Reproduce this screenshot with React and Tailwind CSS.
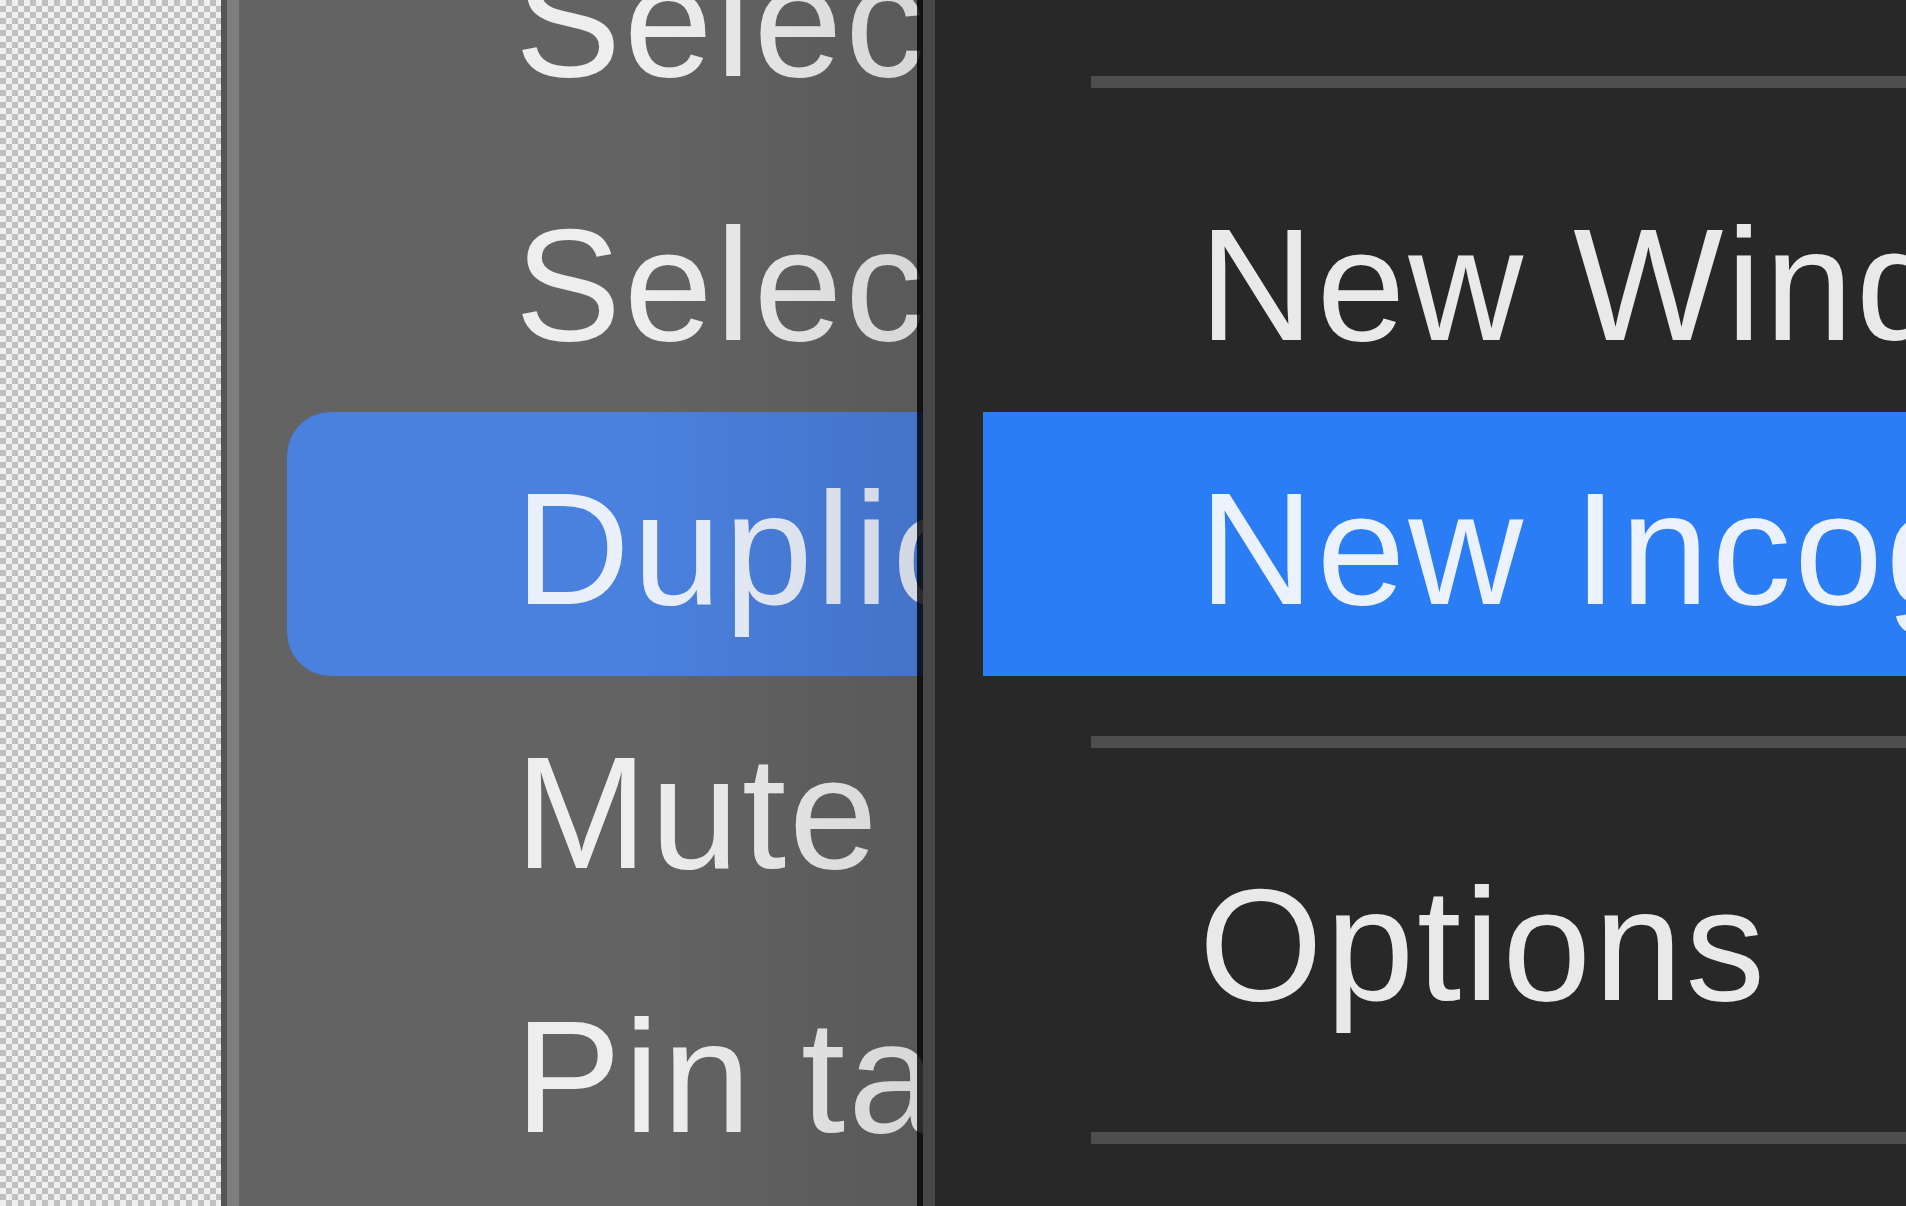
export default function App() {
  const leftRows = [
    { label: "Select all tabs" },
    { label: "Select tabs to the right" },
    { label: "Duplicate tab", active: true },
    { label: "Mute tab" },
    { label: "Pin tab" },
  ];
  return (
    <div className="flex h-[1206px] w-[1906px] overflow-hidden font-['Liberation_Sans',Arial,sans-serif] text-[159px] tracking-[3px]">
      <div className="w-[221px] shrink-0 bg-[#efefef] bg-[image:repeating-conic-gradient(#c0c0c0_0%_25%,#efefef_0%_50%)] bg-[length:12px_12px]" />
      <div className="w-[6px] shrink-0 bg-[#555555]" />
      <div className="w-[12px] shrink-0 bg-[#7e7e7e]" />
      <div className="relative w-[684px] shrink-0 overflow-hidden bg-[#636363]">
        <div className="-mt-[116px] flex flex-col">
          {leftRows.map((r) => (
            <div
              key={r.label}
              className={
                r.active
                  ? "ml-[48px] h-[264px] whitespace-nowrap rounded-l-[44px] bg-[#4a80de] pl-[228px] pt-[10px] leading-[254px] text-[#e9f0fc]"
                  : "ml-[48px] h-[264px] whitespace-nowrap pl-[228px] pt-[10px] leading-[254px] text-[#eeeeee]"
              }
            >
              {r.label}
            </div>
          ))}
        </div>
        <div className="pointer-events-none absolute inset-y-0 right-0 w-[280px] bg-linear-to-l from-black/10 to-transparent" />
        <div className="absolute inset-y-0 right-0 w-[6px] bg-black/80" />
      </div>
      <div className="w-[12px] shrink-0 bg-[#474747]" />
      <div className="min-w-0 flex-1 overflow-hidden bg-[#282828]">
        <div className="mt-[16px] flex flex-col">
          <div className="h-[132px] pt-[60px]">
            <div className="ml-[156px] h-[12px] bg-[#4e4e4e]" />
          </div>
          <div className="ml-[48px] h-[264px] whitespace-nowrap pl-[216px] pt-[10px] leading-[254px] text-[#e9e9e9]">
            New Window
          </div>
          <div className="ml-[48px] h-[264px] whitespace-nowrap bg-[#2b7df5] pl-[216px] pt-[10px] leading-[254px] text-[#ebf2fe]">
            New Incognito Window
          </div>
          <div className="h-[132px] pt-[60px]">
            <div className="ml-[156px] h-[12px] bg-[#4e4e4e]" />
          </div>
          <div className="ml-[48px] h-[264px] whitespace-nowrap pl-[216px] pt-[10px] leading-[254px] text-[#e9e9e9]">
            Options
          </div>
          <div className="h-[132px] pt-[60px]">
            <div className="ml-[156px] h-[12px] bg-[#4e4e4e]" />
          </div>
        </div>
      </div>
    </div>
  );
}
